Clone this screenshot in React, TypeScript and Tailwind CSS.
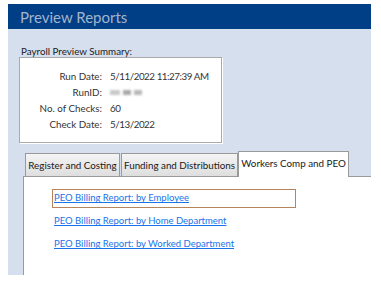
const font = "font-['Lato','Noto_Sans',sans-serif]";

const summary = [
  { label: 'Run Date:', value: '5/11/2022 11:27:39 AM' },
  { label: 'RunID:', value: null },
  { label: 'No. of Checks:', value: '60' },
  { label: 'Check Date:', value: '5/13/2022' },
];

const tabs = ['Register and Costing', 'Funding and Distributions'];

const links = [
  'PEO Billing Report: by Employee',
  'PEO Billing Report: by Home Department',
  'PEO Billing Report: by Worked Department',
];

export default function App() {
  return (
    <div className={`w-[381px] h-[289px] bg-white pl-[8px] pt-[4px] whitespace-nowrap ${font}`}>
      <div className="w-[363px] bg-[#d5dfee]">
        {/* Header */}
        <div className="h-[25px] bg-[#003e86] pl-[12px] flex items-center">
          <span className="text-[15px] leading-none text-[#a3b4cc] pt-[1px]">Preview Reports</span>
        </div>

        <div className="h-[246px] flex flex-col">
          {/* Summary */}
          <div className="pl-[13px] pt-[17px] text-[9.8px] leading-[11px] text-[#222]">Payroll Preview Summary:</div>
          <div className="ml-[11px] w-[203px] h-[86px] bg-white border border-[#a9a9a9] shadow-[inset_-1px_-1px_0_#ffffff,1px_1px_0_#ffffff] pt-[10px]">
            {summary.map((row) => (
              <div key={row.label} className="flex h-[16px] items-center text-[9.8px] text-[#333]">
                <span className="w-[82px] text-right">{row.label}</span>
                <span className="ml-[8px] tracking-[-0.45px]">
                  {row.value ?? (
                    <span className="flex gap-[3px] items-center">
                      <span className="w-[10px] h-[5px] bg-[#c8c8c8] blur-[1px]" />
                      <span className="w-[8px] h-[5px] bg-[#a8a8a8] blur-[1px]" />
                      <span className="w-[8px] h-[5px] bg-[#b8b8b8] blur-[1px]" />
                    </span>
                  )}
                </span>
              </div>
            ))}
          </div>

          {/* Tabs */}
          <div className="ml-[15px] mt-[8px] flex items-end h-[25px]">
            <div className="flex items-end ml-[2px]">
              <div className="h-[23px] w-[95px] flex items-center justify-center border border-b-0 border-[#9a9a9a] bg-gradient-to-b from-[#f4f4f4] to-[#dedede] text-[9.8px] text-[#1a1a1a] mr-[1px]">
                {tabs[0]}
              </div>
              <div className="h-[23px] w-[117px] flex items-center justify-center border border-b-0 border-[#9a9a9a] bg-gradient-to-b from-[#f4f4f4] to-[#dedede] text-[9.8px] text-[#1a1a1a]">
                {tabs[1]}
              </div>
              <div className="h-[26px] w-[111px] -mb-px relative z-10 flex items-center justify-center border border-b-0 border-[#9a9a9a] bg-white text-[9.8px] text-[#1a1a1a] pb-[2px]">
                Workers Comp and PEO
              </div>
            </div>
          </div>
          <div className="ml-[15px] flex-1 bg-white border-l border-t border-[#9a9a9a] pl-[28px] pt-[12px]">
            {links.map((l, i) => (
              <div
                key={l}
                className={`w-[244px] h-[19px] flex items-center mb-[4px] pl-[1px] border ${i === 0 ? 'border-[#b5845a]' : 'border-transparent'}`}
              >
                <a href="#" className="text-[9.5px] text-[#1a73e8] underline">{l}</a>
              </div>
            ))}
          </div>
        </div>
      </div>
    </div>
  );
}
